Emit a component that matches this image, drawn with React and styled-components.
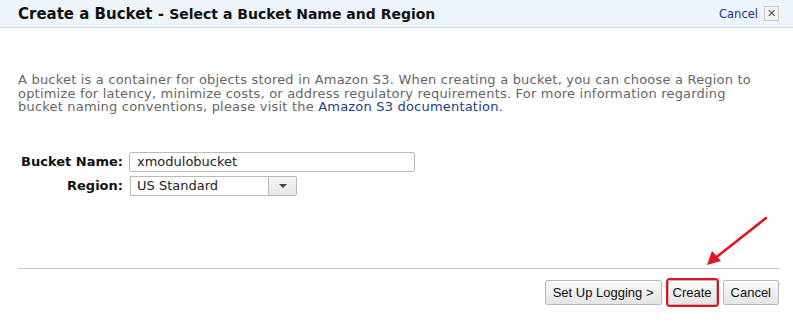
import React from "react";
import styled, { createGlobalStyle } from "styled-components";

const GlobalStyle = createGlobalStyle`
  html, body {
    margin: 0;
    padding: 0;
    background: #ffffff;
  }
  body {
    font-family: "DejaVu Sans", Verdana, sans-serif;
  }
`;

const Dialog = styled.div`
  position: relative;
  width: 793px;
  height: 322px;
  background: #ffffff;
  display: flex;
  flex-direction: column;
`;

const TitleBar = styled.div`
  height: 28px;
  background: #eef4fc;
  border-bottom: 1px solid #c9def3;
  display: flex;
  align-items: center;
  justify-content: space-between;
  padding: 0 14px 0 18px;
  box-sizing: border-box;
`;

const Title = styled.h1`
  margin: 0;
  font-size: 15px;
  font-weight: bold;
  color: #111111;
  span {
    font-size: 14px;
  }
`;

const CloseArea = styled.div`
  display: flex;
  align-items: center;
  gap: 6px;
`;

const CancelLink = styled.a`
  font-size: 11.5px;
  color: #1c2f8c;
  text-decoration: none;
`;

const CloseBox = styled.span`
  width: 13px;
  height: 13px;
  border: 1px solid #c8c8c8;
  background: #f3f3f3;
  display: flex;
  align-items: center;
  justify-content: center;
  font-size: 11px;
  font-weight: bold;
  color: #555555;
  line-height: 1;
`;

const Intro = styled.p`
  margin: 45px 20px 0 18px;
  font-size: 13px;
  line-height: 13.5px;
  letter-spacing: 0.2px;
  color: #666666;
  white-space: nowrap;
  a {
    color: #1a3f88;
    text-decoration: none;
  }
`;

const Form = styled.div`
  margin: 38px 0 0 18px;
  display: grid;
  grid-template-columns: 105px auto;
  column-gap: 6px;
  row-gap: 4px;
  align-items: center;
`;

const Label = styled.label`
  text-align: right;
  font-size: 13px;
  font-weight: bold;
  color: #111111;
`;

const TextInput = styled.div`
  width: 286px;
  height: 20px;
  box-sizing: border-box;
  border: 1px solid #b9b9b9;
  border-radius: 2px;
  padding: 0 7px;
  font-size: 13px;
  line-height: 18px;
  color: #222222;
`;

const Select = styled.div`
  display: flex;
  margin-left: 1px;
  height: 20px;
`;

const SelectValue = styled.div`
  width: 138px;
  box-sizing: border-box;
  border: 1px solid #b9b9b9;
  border-right: none;
  padding: 0 6px;
  font-size: 13px;
  line-height: 18px;
  color: #222222;
`;

const SelectArrow = styled.div`
  width: 29px;
  box-sizing: border-box;
  border: 1px solid #b9b9b9;
  border-radius: 0 2px 2px 0;
  background: linear-gradient(#f7f7f7, #e6e6e6);
  display: flex;
  align-items: center;
  justify-content: center;
  &::after {
    content: "";
    border-left: 4px solid transparent;
    border-right: 4px solid transparent;
    border-top: 4px solid #444444;
  }
`;

const Spacer = styled.div`
  flex: 1;
`;

const Footer = styled.div`
  margin: 0 14px 17px 18px;
  border-top: 1px solid #c8c8c8;
  padding-top: 11px;
  display: flex;
  justify-content: flex-end;
  gap: 6px;
`;

const Button = styled.button`
  height: 25px;
  padding: 0 ${(p) => p.$pad || 7}px;
  font-family: "Liberation Sans", Arial, sans-serif;
  font-size: 13px;
  color: #111111;
  background: linear-gradient(#fafafa, #e4e4e4);
  border: 1px solid #b8b8b8;
  border-radius: 2px;
  box-shadow: ${(p) => (p.$highlight ? "0 0 0 2px #e8101a" : "none")};
  cursor: pointer;
`;

const Arrow = styled.svg`
  position: absolute;
  left: 700px;
  top: 212px;
  pointer-events: none;
`;

export default function App() {
  return (
    <>
      <GlobalStyle />
      <Dialog>
        <TitleBar>
          <Title>
            Create a Bucket - <span>Select a Bucket Name and Region</span>
          </Title>
          <CloseArea>
            <CancelLink href="#">Cancel</CancelLink>
            <CloseBox>✕</CloseBox>
          </CloseArea>
        </TitleBar>
        <Intro>
          A bucket is a container for objects stored in Amazon S3. When creating a
          bucket, you can choose a Region to
          <br />
          optimize for latency, minimize costs, or address regulatory requirements.
          For more information regarding
          <br />
          bucket naming conventions, please visit the{" "}
          <a href="#">Amazon S3 documentation</a>.
        </Intro>
        <Form>
          <Label>Bucket Name:</Label>
          <TextInput>xmodulobucket</TextInput>
          <Label>Region:</Label>
          <Select>
            <SelectValue>US Standard</SelectValue>
            <SelectArrow />
          </Select>
        </Form>
        <Spacer />
        <Footer>
          <Button>Set Up Logging &gt;</Button>
          <Button $highlight $pad={4}>Create</Button>
          <Button>Cancel</Button>
        </Footer>
        <Arrow width="75" height="60" viewBox="0 0 75 60">
          <line x1="66" y1="6" x2="14" y2="47" stroke="#e8101a" strokeWidth="2.5" strokeLinecap="round" />
          <polygon points="7,53 12,39 21,49" fill="#e8101a" />
        </Arrow>
      </Dialog>
    </>
  );
}
